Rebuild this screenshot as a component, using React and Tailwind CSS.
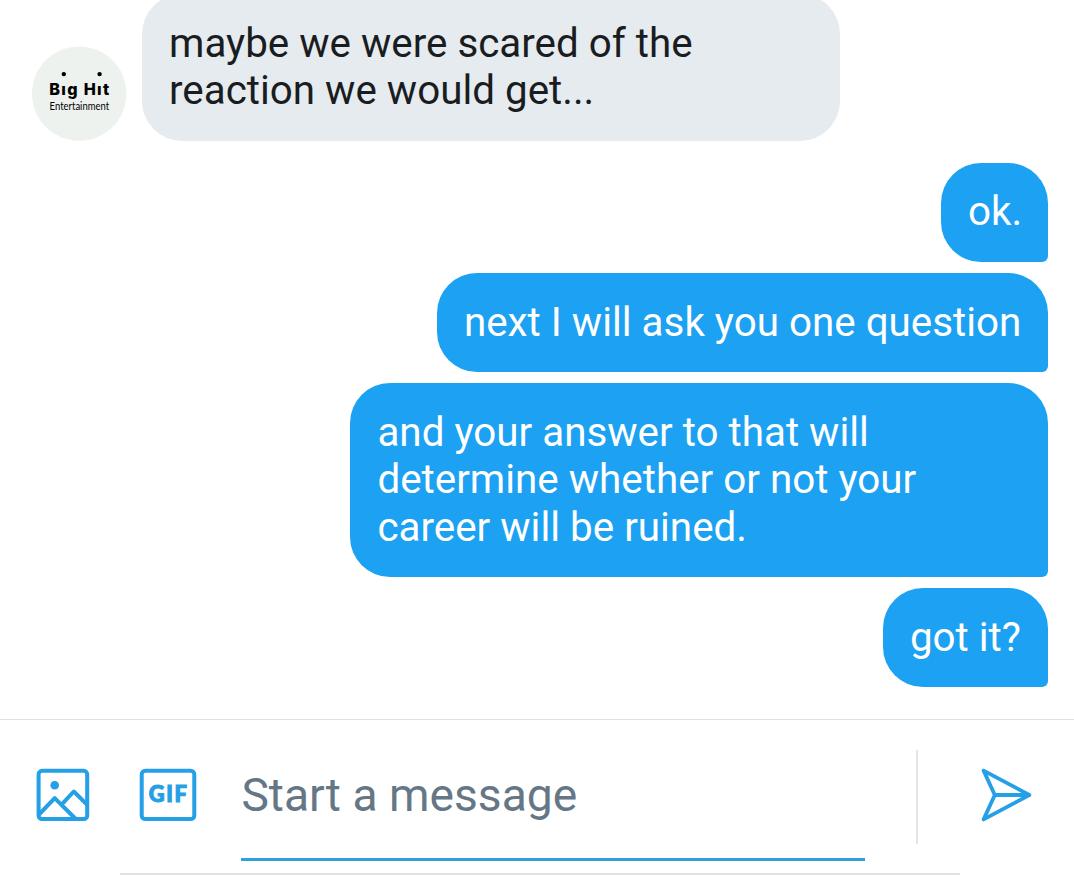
import React from "react";

function Sent({ className, children }) {
  return (
    <div
      className={`rounded-[40px] rounded-br-[6px] bg-[#1da1f2] px-[27px] text-[40.37px] leading-[47.5px] whitespace-nowrap text-white ${className}`}
    >
      {children}
    </div>
  );
}

function Avatar() {
  return (
    <svg className="mt-[52px] h-[95px] w-[95px] shrink-0" viewBox="0 0 95 95">
      <circle cx="47.2" cy="47.6" r="47.2" fill="#eef2ef" />
      <circle cx="31.8" cy="28.1" r="2.2" fill="#000" />
      <circle cx="67.6" cy="28.1" r="2.2" fill="#000" />
      <g fill="#000">
        <text x="17.2" y="48.6" fontFamily="Inter, sans-serif" fontSize="16.2" fontWeight="800" textLength="60" lengthAdjust="spacing">
          Bıg Hıt
        </text>
        <text x="17.6" y="63.6" fontFamily="Lato, sans-serif" fontSize="10.8" fontWeight="400" textLength="59.5" lengthAdjust="spacingAndGlyphs">
          Entertainment
        </text>
      </g>
    </svg>
  );
}

export default function App() {
  return (
    <div
      className="flex h-[875px] w-[1074px] flex-col overflow-hidden bg-white"
      style={{ fontFamily: "Roboto, sans-serif" }}
    >
      <main className="flex h-[719px] shrink-0 flex-col">
        <div className="-mt-[6px] flex h-[147px] shrink-0 pl-[32px]">
          <Avatar />
          <div className="ml-[15px] h-[147px] w-[698px] rounded-[40px] bg-[#e6ebf0] px-[27px] pt-[26px] text-[40.37px] leading-[47.25px] whitespace-nowrap text-[#1a1d20]">
            maybe we were scared of the
            <br />
            reaction we would get...
          </div>
        </div>
        <div className="mt-[21.5px] flex flex-col items-end gap-[10.7px] pr-[25.6px]">
          <Sent className="h-[99.5px] w-[107.5px] pt-[25.5px]">ok.</Sent>
          <Sent className="h-[99.5px] w-[611.5px] pt-[26px]">next I will ask you one question</Sent>
          <Sent className="h-[194px] w-[698px] pt-[26px]">
            and your answer to that will
            <br />
            determine whether or not your
            <br />
            career will be ruined.
          </Sent>
          <Sent className="h-[99.5px] w-[165.5px] pt-[26px]">got it?</Sent>
        </div>
      </main>
      <footer className="flex h-[154px] shrink-0 items-start border-t border-[#dfe1e3] text-[#1da1f2]">
        <svg className="mt-[48px] ml-[36px] h-[54px] w-[54px]" viewBox="0 0 54 54" fill="none" stroke="#259fe6" strokeWidth="4">
          <rect x="2.6" y="2.8" width="48.6" height="48.2" rx="3.5" />
          <path d="M3 46.5 18.7 30.2 39.8 51M26 36.2 37.8 23.5 51.5 37.2" strokeLinejoin="round" />
          <circle cx="18.7" cy="17.3" r="4.3" fill="#259fe6" stroke="none" />
        </svg>
        <svg className="mt-[48px] ml-[49px] h-[54px] w-[58px]" viewBox="0 0 58 54">
          <rect x="2.7" y="2.8" width="52.6" height="48.2" rx="3.5" fill="none" stroke="#259fe6" strokeWidth="4" />
          <text x="9.8" y="34.4" fontFamily="Lato, sans-serif" fontSize="21.8" fontWeight="900" fill="#259fe6" stroke="#259fe6" strokeWidth="1.1" textLength="38" lengthAdjust="spacing">
            GIF
          </text>
        </svg>
        <div className="ml-[44px] h-[141px] w-[624px] border-b-[3px] border-[#2f9fdd] pt-[48px] pl-[0.4px] text-[46.2px] leading-[54px] whitespace-nowrap text-[#657786]">
          Start a message
        </div>
        <div className="mt-[30px] ml-[51px] h-[94px] w-[2px] bg-[#e3e5e7]" />
        <svg className="mt-[47px] ml-[62px] h-[56px] w-[54px]" viewBox="0 0 54 56" fill="none" stroke="#259fe6" strokeWidth="3.8" strokeLinejoin="round" strokeLinecap="round">
          <path d="M3.6 3.6 49.3 28 3.6 52.4 14.8 28ZM14.8 28H49" />
        </svg>
      </footer>
      <div className="ml-[120px] h-[2px] w-[840px] shrink-0 bg-[#e1e1e1]" />
    </div>
  );
}
